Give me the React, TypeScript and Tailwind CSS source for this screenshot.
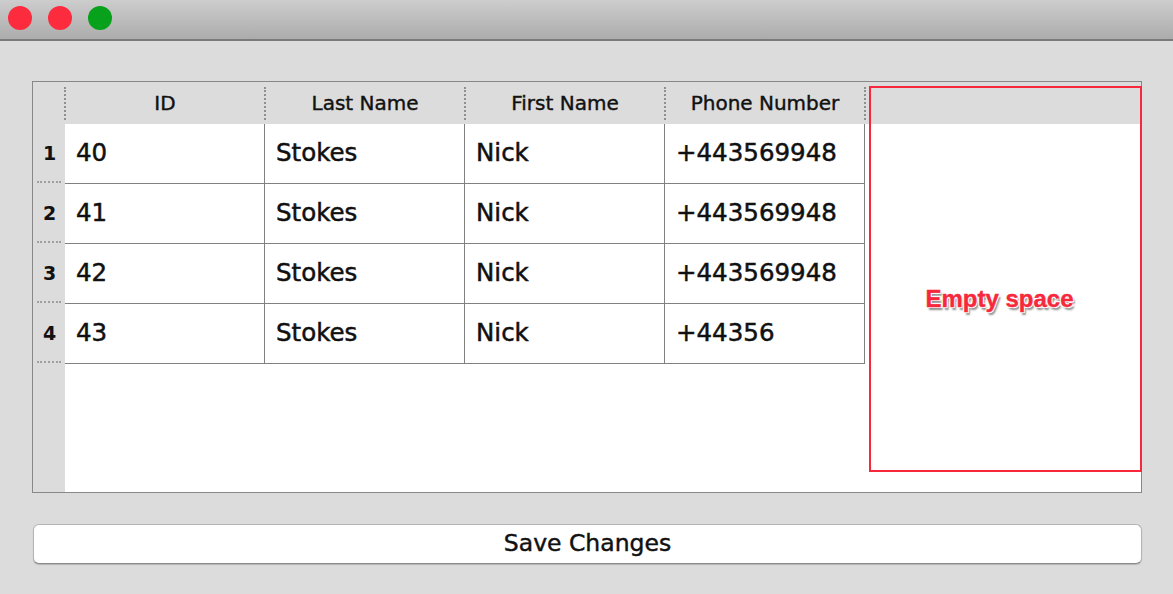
import React from "react";

const rows = [
  { n: 1, id: "40", last: "Stokes", first: "Nick", phone: "+443569948" },
  { n: 2, id: "41", last: "Stokes", first: "Nick", phone: "+443569948" },
  { n: 3, id: "42", last: "Stokes", first: "Nick", phone: "+443569948" },
  { n: 4, id: "43", last: "Stokes", first: "Nick", phone: "+44356" },
];

const headers = ["ID", "Last Name", "First Name", "Phone Number"];

function Sep() {
  return <div className="h-[33px] w-[2px] shrink-0 border-l-2 border-dotted border-[#8f8f8f]" />;
}

export default function App() {
  return (
    <div
      className="flex h-[594px] w-[1173px] flex-col bg-[#dcdcdc] text-[#111]"
      style={{ fontFamily: '"DejaVu Sans", "Liberation Sans", sans-serif' }}
    >
      {/* Title bar */}
      <div className="flex h-[41px] shrink-0 items-center gap-[16px] border-b-2 border-[#7a7a7a] bg-linear-to-b from-[#cdcdcd] to-[#acacac] pb-[3px] pl-[8px]">
        <div className="h-[24px] w-[24px] rounded-full bg-[#fd2b3e]" />
        <div className="h-[24px] w-[24px] rounded-full bg-[#fd2b3e]" />
        <div className="h-[24px] w-[24px] rounded-full bg-[#07a11c]" />
      </div>

      {/* Table frame */}
      <div className="relative ml-[32px] mr-[31px] mt-[40px] flex h-[412px] flex-col border border-[#888888] bg-white">
        {/* Header */}
        <div className="flex h-[42px] shrink-0 items-center bg-[#dcdcdc]">
          <div className="w-[31px] shrink-0" />
          {headers.map((h) => (
            <React.Fragment key={h}>
              <Sep />
              <div className="w-[198px] shrink-0 text-center text-[20px] leading-none [-webkit-text-stroke:0.4px_#111]">
                {h}
              </div>
            </React.Fragment>
          ))}
          <Sep />
        </div>

        {/* Body */}
        <div className="flex flex-1">
          <div className="flex w-[32px] shrink-0 flex-col bg-[#dcdcdc]">
            {rows.map((r) => (
              <div key={r.n} className="flex h-[60px] flex-col">
                <div className="flex flex-1 items-center justify-center pl-[1px] pt-[1px] text-[19px] font-bold leading-none text-[#111]">
                  {r.n}
                </div>
                <div className="mx-[4px] mb-[1px] border-b-2 border-dotted border-[#a0a0a0]" />
              </div>
            ))}
          </div>
          <div className="flex flex-1 flex-col bg-white">
            {rows.map((r) => (
              <div key={r.n} className="flex h-[60px]">
                {[r.id, r.last, r.first, r.phone].map((v, i) => (
                  <div
                    key={i}
                    className="flex w-[200px] shrink-0 items-center border-b border-r border-[#808080] pl-[11px] text-[24.5px] leading-none [-webkit-text-stroke:0.5px_#111]"
                  >
                    {v}
                  </div>
                ))}
              </div>
            ))}
          </div>
        </div>

        {/* Annotation overlay */}
        <div className="absolute left-[836px] top-[4px] flex h-[386px] w-[273px] justify-center border-2 border-[#f7283c]">
          <div
            className="mr-[12px] mt-[193px] h-fit text-[24px] font-bold leading-normal text-[#f7283c] [-webkit-text-stroke:0.4px_#f7283c] [text-shadow:1px_1px_0_#fff,-1px_-1px_0_#fff,1px_-1px_0_#fff,-1px_1px_0_#fff,2px_3px_2px_#8a8a8a]"
            style={{ fontFamily: '"Liberation Sans", Arial, sans-serif' }}
          >
            Empty space
          </div>
        </div>
      </div>

      {/* Button */}
      <div className="ml-[33px] mr-[31px] mt-[31px] flex h-[40px] items-center justify-center rounded-[6px] border border-[#b4b4b4] border-b-[#8a8a8a] bg-white text-[23.5px] leading-none shadow-[0_1px_1px_rgba(0,0,0,0.18)] [-webkit-text-stroke:0.45px_#111]">
        Save Changes
      </div>
    </div>
  );
}
